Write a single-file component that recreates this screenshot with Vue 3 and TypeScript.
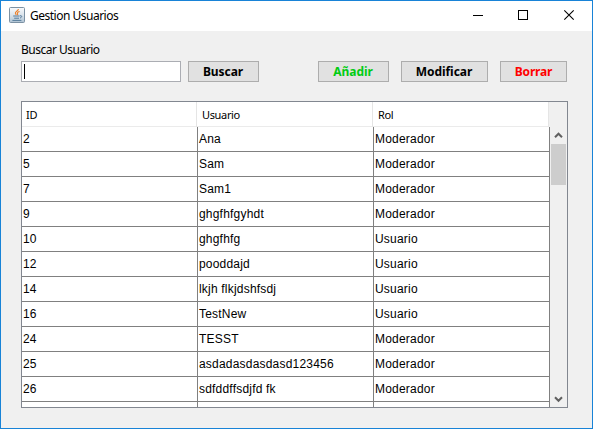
<script setup lang="ts">
interface User {
  id: number
  name: string
  role: string
}

const users: User[] = [
  { id: 2, name: 'Ana', role: 'Moderador' },
  { id: 5, name: 'Sam', role: 'Moderador' },
  { id: 7, name: 'Sam1', role: 'Moderador' },
  { id: 9, name: 'ghgfhfgyhdt', role: 'Moderador' },
  { id: 10, name: 'ghgfhfg', role: 'Usuario' },
  { id: 12, name: 'pooddajd', role: 'Usuario' },
  { id: 14, name: 'lkjh flkjdshfsdj', role: 'Usuario' },
  { id: 16, name: 'TestNew', role: 'Usuario' },
  { id: 24, name: 'TESST', role: 'Moderador' },
  { id: 25, name: 'asdadasdasdasd123456', role: 'Moderador' },
  { id: 26, name: 'sdfddffsdjfd fk', role: 'Moderador' },
]
</script>

<template>
  <div class="window">
    <header class="titlebar">
      <svg class="java" width="16" height="16" viewBox="0 0 16 16">
        <defs>
          <linearGradient id="tile" x1="0" y1="0" x2="0" y2="1">
            <stop offset="0" stop-color="#f8fafc" />
            <stop offset="0.5" stop-color="#dbe4ec" />
            <stop offset="1" stop-color="#aec2d3" />
          </linearGradient>
        </defs>
        <rect x="0.5" y="0.5" width="15" height="15" rx="1" fill="url(#tile)" stroke="#7c91a3" />
        <path d="M9.4 2C9.6 4 5.6 4.6 6.4 6.3 6.7 7 7.1 7.3 7.2 8.1M10.6 4.4C8.4 5.1 7.8 5.8 8.6 6.8 9 7.4 8.5 7.9 8.2 8.2" fill="none" stroke="#ed812b" stroke-width="1.1" />
        <path d="M4.2 9H10.6M5.2 11.2H10M11 8.8C13.4 8.2 13.2 10.4 11 11M3.4 13.4H12.4" fill="none" stroke="#557b9b" stroke-width="1" />
      </svg>
      <h1 class="title">Gestion Usuarios</h1>
      <svg class="controls" width="138" height="30" viewBox="0 0 138 30" shape-rendering="crispEdges">
        <path d="M18 14.5H28" stroke="#000" />
        <rect x="63.5" y="9.5" width="9" height="9" fill="none" stroke="#000" />
        <path d="M109.3 9.3L118.7 18.7M118.7 9.3L109.3 18.7" stroke="#000" stroke-width="1.1" shape-rendering="auto" />
      </svg>
    </header>

    <main class="content">
      <label class="search-label" for="search">Buscar Usuario</label>
      <div class="toolbar">
        <div id="search" class="field"><span class="caret"></span></div>
        <button class="btn find">Buscar</button>
        <button class="btn add">Añadir</button>
        <button class="btn edit">Modificar</button>
        <button class="btn remove">Borrar</button>
      </div>

      <section class="pane">
        <div class="grid">
          <div class="head">
            <span>ID</span><span>Usuario</span><span>Rol</span>
          </div>
          <div v-for="user in users" :key="user.id" class="row">
            <span>{{ user.id }}</span><span>{{ user.name }}</span><span>{{ user.role }}</span>
          </div>
          <div class="row"><span></span><span></span><span></span></div>
        </div>
        <div class="scroll">
          <svg class="arrow" width="9" height="7" viewBox="0 0 9 7"><path d="M1 5.2L4.5 1.7L8 5.2" /></svg>
          <div class="thumb"></div>
          <svg class="arrow down" width="9" height="7" viewBox="0 0 9 7"><path d="M1 1.3L4.5 4.8L8 1.3" /></svg>
        </div>
      </section>
    </main>
  </div>
</template>

<style>
body {
  margin: 0;
  overflow: hidden;
}
</style>

<style scoped>
* {
  box-sizing: border-box;
}
.window {
  width: 593px;
  height: 429px;
  border: 1px solid #1883d7;
  background: #f0f0f0;
  color: #000;
  font-family: "Noto Sans", sans-serif;
  white-space: nowrap;
}
.titlebar {
  height: 30px;
  display: flex;
  background: #fff;
}
.java {
  margin: 6px 0 0 8px;
}
.title {
  margin: 0 auto 0 5px;
  font-size: 12px;
  font-weight: 400;
  line-height: 30px;
  letter-spacing: -0.5px;
}
.controls {
  display: block;
  margin-right: -1px;
}
.content {
  padding: 10px 24px 0 20px;
}
.search-label {
  display: block;
  height: 20px;
  font-size: 12px;
  line-height: 17px;
  letter-spacing: -0.5px;
}
.toolbar {
  display: flex;
  height: 21px;
}
.field {
  width: 160px;
  padding: 2px;
  border: 1px solid #abadb3;
  background: #fff;
}
.caret {
  display: block;
  width: 1px;
  height: 15px;
  background: #000;
}
.btn {
  height: 21px;
  padding: 0;
  border: 1px solid #adadad;
  background: #e1e1e1;
  color: #000;
  font: 700 12px/19px "Noto Sans", sans-serif;
  letter-spacing: -0.05px;
}
.find {
  width: 71px;
  margin-left: 7px;
}
.add {
  width: 71px;
  margin-left: 59px;
  color: #0c1;
}
.edit {
  width: 87px;
  margin-left: 12px;
}
.remove {
  width: 67px;
  margin-left: 12px;
  color: #f00;
  letter-spacing: -0.2px;
}
.find,
.add,
.edit {
  padding-right: 1px;
}
.pane {
  display: flex;
  width: 547px;
  height: 307px;
  margin-top: 19px;
  border: 1px solid #828790;
  overflow: hidden;
}
.grid {
  width: 528px;
  flex: none;
}
.head {
  display: grid;
  grid-template-columns: 176px 176px 175px;
  width: 527px;
  height: 25px;
  border-bottom: 1px solid #ebebeb;
  background: #fff;
  font-size: 11px;
  line-height: 26px;
  letter-spacing: -0.35px;
}
.head span {
  padding-left: 4px;
  border-right: 1px solid #e5e5e5;
}
.head span:not(:last-child) {
  margin-right: 1px;
}
.head span + span {
  padding-left: 4px;
}
.row {
  display: grid;
  grid-template-columns: 176px 176px 176px;
  height: 25px;
  font-family: "Liberation Sans", sans-serif;
  font-size: 12px;
  line-height: 24px;
  letter-spacing: 0.2px;
}
.row span {
  padding-left: 1px;
  border-right: 1px solid #808080;
  border-bottom: 1px solid #808080;
  background: #fff;
}
.scroll {
  flex: 1;
  display: flex;
  flex-direction: column;
  padding: 30px 1px 4px;
}
.arrow {
  flex: none;
  margin: 0 0 5px 3px;
  fill: none;
  stroke: #606060;
  stroke-width: 2;
}
.thumb {
  height: 41px;
  background: #cdcdcd;
}
.down {
  margin: auto 0 0 3px;
}
</style>
